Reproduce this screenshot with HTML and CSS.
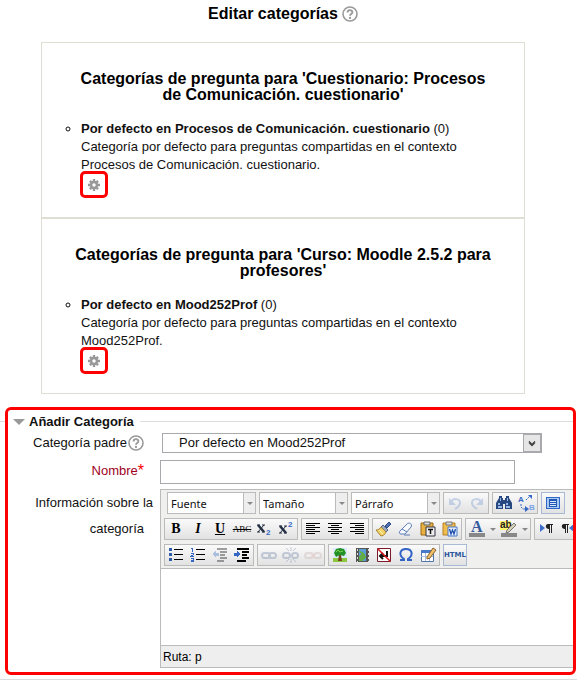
FILE: index.html
```html
<!DOCTYPE html>
<html lang="es">
<head>
<meta charset="utf-8">
<title>Editar categorías</title>
<link rel="stylesheet" href="styles.css">
</head>
<body>
<svg class="sprite" aria-hidden="true">
  <symbol id="help" viewBox="0 0 16 16">
    <circle cx="8" cy="8" r="7" fill="#fff" stroke="#999" stroke-width="1.6"/>
    <path d="M5.6 6.4C5.6 3.4 10.4 3.4 10.4 6.2C10.4 8 8 7.900 8 9.800" fill="none" stroke="#999" stroke-width="1.900"/>
    <rect x="7" y="10.900" width="2" height="2" fill="#999"/>
  </symbol>
  <symbol id="gear" viewBox="0 0 12 12">
    <g stroke="#999" stroke-width="2.400"><path d="M6 0V12M0 6H12M1.900 1.900L10.100 10.100M10.100 1.900L1.900 10.100"/></g>
    <circle cx="6" cy="6" r="4.200" fill="#999"/><circle cx="6" cy="6" r="1.700" fill="#fff"/>
  </symbol>
</svg>

<main class="categories">
  <h1 class="page-title">Editar categorías <a class="help" href="#ayuda" aria-label="Ayuda"><svg><use href="#help"/></svg></a></h1>

  <section class="box">
    <h2>Categorías de pregunta para 'Cuestionario: Procesos de Comunicación. cuestionario'</h2>
    <ul>
      <li><b>Por defecto en Procesos de Comunicación. cuestionario</b> (0)<br>Categoría por defecto para preguntas compartidas en el contexto Procesos de Comunicación. cuestionario.
        <button class="edit" type="button" aria-label="Editar"><svg><use href="#gear"/></svg></button></li>
    </ul>
  </section>
  <section class="box">
    <h2>Categorías de pregunta para 'Curso: Moodle 2.5.2 para profesores'</h2>
    <ul>
      <li><b>Por defecto en Mood252Prof</b> (0)<br>Categoría por defecto para preguntas compartidas en el contexto Mood252Prof.
        <button class="edit" type="button" aria-label="Editar"><svg><use href="#gear"/></svg></button></li>
    </ul>
  </section>
</main>

<div class="form-area">
<form class="add-form">
  <h3 class="legend"><span class="triangle"></span>Añadir Categoría</h3>

  <div class="row">
    <div class="label"><label for="parent">Categoría padre</label><a class="help" href="#ayuda-padre" aria-label="Ayuda"><svg><use href="#help"/></svg></a></div>
    <div class="field">
      <div class="parent-select">
        <select id="parent"><option>Por defecto en Mood252Prof</option></select>
        <span class="arrow"><svg viewBox="0 0 16 18"><path d="M5 7l3 3 3-3v2.500l-3 3-3-3z" fill="#444" stroke="#444"/></svg></span>
      </div>
    </div>
  </div>

  <div class="row name-row">
    <label class="label required" for="name">Nombre<span class="star">*</span></label>
    <div class="field"><input id="name" class="name" type="text"></div>
  </div>

  <div class="row editor-row">
    <label class="label two-lines" for="info"><span>Información sobre la</span><span class="second">categoría</span></label>
    <div class="field">
      <div class="editor">
        <div class="toolbar">
          <div class="tools first">
            <div class="drop"><select aria-label="Fuente"><option>Fuente</option></select><span></span></div>
            <div class="drop"><select aria-label="Tamaño"><option>Tamaño</option></select><span></span></div>
            <div class="drop"><select aria-label="Párrafo"><option>Párrafo</option></select><span></span></div>
            <div class="group">
              <button type="button" aria-label="Deshacer" class="off"><svg viewBox="0 0 22 20"><path d="M7 9C9 5 16 5 16 10C16 13 14 14 11 16" fill="none" stroke="#6f93cf" stroke-width="2"/><path d="M5 5v7h7z" fill="#6f93cf"/></svg></button>
              <button type="button" aria-label="Rehacer" class="off"><svg viewBox="0 0 22 20"><path d="M15 9C13 5 6 5 6 10C6 13 8 14 11 16" fill="none" stroke="#6f93cf" stroke-width="2"/><path d="M17 5v7h-7z" fill="#6f93cf"/></svg></button>
            </div>
            <div class="group">
              <button type="button" aria-label="Buscar"><svg viewBox="0 0 22 20"><path d="M6 3h3v2h1v2h2V5h1V3h3v2l3 5v6h-7v-5h-2v5H3v-6l3-5z" fill="#26477f"/><path d="M7 5h1v3H7zM14 5h1v3h-1zM5 10h2v2H5zM13 10h2v2h-2zM5 13h4v2H5zM13 13h4v2h-4z" fill="#9bb9e6"/></svg></button>
              <button type="button" aria-label="Reemplazar"><svg viewBox="0 0 22 20"><text x="3" y="9" class="tiny">A</text><text x="14" y="17" class="tiny light">B</text><path d="M11 7L15 3M6 11v3l2 2h4" fill="none" stroke="#3467c4" stroke-dasharray="2 1"/><path d="M13 2h4v4zM10 13l4 3-4 3z" fill="#3467c4"/></svg></button>
            </div>
            <div class="group hot">
              <button type="button" aria-label="Pantalla completa"><svg viewBox="0 0 22 20" class="crisp"><path d="M4 4h14v12H4z" fill="#2f69c5"/><path d="M5 5h12v10H5z" fill="#a9c9f5"/><path d="M7 6h8v8H7z" fill="#1f58b5"/><path d="M8 8.500h6M8 10.500h6M8 12.500h6" stroke="#d9e8ff"/></svg></button>
            </div>
          </div>

          <div class="tools">
            <div class="group">
              <button type="button" class="glyph"><b>B</b></button>
              <button type="button" class="glyph"><b><i>I</i></b></button>
              <button type="button" class="glyph"><b><u>U</u></b></button>
              <button type="button" class="glyph small"><s>ABC</s></button>
              <button type="button" aria-label="Subíndice"><svg viewBox="0 0 22 20"><path d="M5 6l6 7" stroke="#222e42" stroke-width="2.500"/><path d="M11 6l-6 7M4 6h3M9 6h3M4 13h3M9 13h3" stroke="#222e42"/><text x="13" y="16" class="tiny">2</text></svg></button>
              <button type="button" aria-label="Superíndice"><svg viewBox="0 0 22 20"><path d="M5 7l6 7" stroke="#222e42" stroke-width="2.500"/><path d="M11 7l-6 7M4 7h3M9 7h3M4 14h3M9 14h3" stroke="#222e42"/><text x="13" y="8" class="tiny">2</text></svg></button>
            </div>
            <div class="group">
              <button type="button" aria-label="Izquierda"><svg viewBox="0 0 22 20" class="crisp"><path d="M4 4.500h14M4 6.500h9M4 8.500h14M4 10.500h9M4 12.500h14M4 14.500h9" stroke="#000"/></svg></button>
              <button type="button" aria-label="Centrar"><svg viewBox="0 0 22 20" class="crisp"><path d="M4 4.500h14M7 6.500h8M4 8.500h14M7 10.500h8M4 12.500h14M7 14.500h8" stroke="#000"/></svg></button>
              <button type="button" aria-label="Derecha"><svg viewBox="0 0 22 20" class="crisp"><path d="M4 4.500h14M9 6.500h9M4 8.500h14M9 10.500h9M4 12.500h14M9 14.500h9" stroke="#000"/></svg></button>
            </div>
            <div class="group">
              <button type="button" aria-label="Limpiar formato"><svg viewBox="0 0 22 20"><path d="M12 7l4-4 2 2-4 4z" fill="#4d6fae" stroke="#2e4d88"/><path d="M10 6l5 5-2 2-5-5z" fill="#9aa9c4" stroke="#56688a"/><path d="M8 8l5 5c-1 3-4 4-5 4L3 11c2 0 4-1 5-3z" fill="#f3d267" stroke="#a78432"/><path d="M6 11l4 4" stroke="#fff3b0"/></svg></button>
              <button type="button" aria-label="Borrador"><svg viewBox="0 0 22 20"><path d="M5 12l7-7c2-2 6 0 4 3l-6 7H6c-2 0-2-2-1-3z" fill="#f6f9ff" stroke="#5f7fb5"/><path d="M7 10l5 3M9 16h6" fill="none" stroke="#5f7fb5"/></svg></button>
              <button type="button" aria-label="Pegar texto"><svg viewBox="0 0 22 20"><path d="M4 4h12v12H4z" fill="#e9b13f" stroke="#9b6a17"/><path d="M7 3h6v3H7z" fill="#d9dce2" stroke="#666"/><path d="M9 8h9v9H9z" fill="#eee" stroke="#334"/><path d="M11 10.500h5M13.500 10v5" stroke="#111" stroke-width="1.500"/></svg></button>
              <button type="button" aria-label="Pegar desde Word"><svg viewBox="0 0 22 20"><path d="M4 4h12v12H4z" fill="#f0bd4d" stroke="#b67f22"/><path d="M7 3h6v3H7z" fill="#d9dce2" stroke="#777"/><path d="M9 8h9v9H9z" fill="#e5efff" stroke="#4878c5"/><path d="M10.500 10l1.500 5 1.500-4 1.500 4 1.500-5" fill="none" stroke="#1c4eaa" stroke-width="1.300"/></svg></button>
            </div>
            <div class="group">
              <button type="button" aria-label="Color de texto"><svg viewBox="0 0 22 20"><text x="5" y="13" class="letter-a">A</text><path d="M3 14h16v4H3z" fill="#888"/></svg></button>
              <button type="button" class="more" aria-label="Más colores"></button>
              <button type="button" aria-label="Color de fondo"><svg viewBox="0 0 22 20"><path d="M2 2h11v9H2z" fill="#fff36a"/><text x="2" y="9" class="ab">ab</text><path d="M9 11l7-7 2 2-7 7-3 1z" fill="#d9d1b6" stroke="#777"/><path d="M3 14h16v4H3z" fill="#888"/></svg></button>
              <button type="button" class="more" aria-label="Más fondos"></button>
            </div>
            <div class="group">
              <button type="button" aria-label="Izquierda a derecha"><svg viewBox="0 0 22 20"><path d="M5 5v8l5-4z" fill="#3d70c9"/><path d="M13 5h5v1h-1v8h-1V6h-1v8h-1v-4c-4 0-4-5-1-5z" fill="#222"/></svg></button>
              <button type="button" aria-label="Derecha a izquierda"><svg viewBox="0 0 22 20"><path d="M17 5v8l-5-4z" fill="#3d70c9"/><path d="M7 5h5v1h-1v8h-1V6H9v8H8v-4C4 10 4 5 7 5z" fill="#222"/></svg></button>
            </div>
          </div>

          <div class="tools">
            <div class="group">
              <button type="button" aria-label="Lista"><svg viewBox="0 0 22 20" class="crisp"><path d="M4 3h3v3H4zM4 8h3v3H4zM4 13h3v3H4z" fill="#2e5da8"/><path d="M9 4.500h9M9 9.500h9M9 14.500h9" stroke="#000"/></svg></button>
              <button type="button" aria-label="Lista numerada"><svg viewBox="0 0 22 20" class="crisp"><path d="M4 3.500h1.500V7M4 8.500h2.500v1L4 11.500h3M4 13.500h2.500v3H4M4 15h2" fill="none" stroke="#3467c4"/><path d="M9 4.500h9M9 9.500h9M9 14.500h9" stroke="#000"/></svg></button>
              <button type="button" aria-label="Reducir sangría" class="off"><svg viewBox="0 0 22 20" class="crisp"><path d="M8 3.500h10M11 6.500h7M11 9.500h5M11 12.500h7M8 15.500h7" stroke="#000" stroke-width="2"/><path d="M3 9l4-3v2h3v3H7v2z" fill="#3467c4"/></svg></button>
              <button type="button" aria-label="Aumentar sangría"><svg viewBox="0 0 22 20" class="crisp"><path d="M6 3.500h12M11 6.500h7M11 9.500h5M11 12.500h7M6 15.500h9" stroke="#000" stroke-width="2"/><path d="M9 9L6 6v2H3v3h3v2z" fill="#3467c4"/></svg></button>
            </div>
            <div class="group">
              <button type="button" aria-label="Enlace" class="off"><svg viewBox="0 0 22 20"><rect x="4" y="8" width="8" height="5" rx="2.500" fill="none" stroke="#6980a5" stroke-width="2"/><rect x="11" y="8" width="7" height="5" rx="2.500" fill="none" stroke="#6980a5" stroke-width="2"/></svg></button>
              <button type="button" aria-label="Quitar enlace" class="off"><svg viewBox="0 0 22 20"><rect x="3" y="8" width="7" height="5" rx="2.500" fill="none" stroke="#6980a5" stroke-width="2"/><rect x="12" y="8" width="6" height="5" rx="2.500" fill="none" stroke="#6980a5" stroke-width="2"/><path d="M11 2v4M6 3l3 3M16 3l-3 3M11 14v4M6 17l3-3M16 17l-3-3" stroke="#6980a5"/></svg></button>
              <button type="button" aria-label="Evitar enlace" class="off faint"><svg viewBox="0 0 22 20"><rect x="3" y="8" width="8" height="5" rx="2.500" fill="none" stroke="#a88" stroke-width="2"/><rect x="12" y="8" width="7" height="5" rx="2.500" fill="none" stroke="#a88" stroke-width="2"/><path d="M8 8l6 5M14 8l-6 5" stroke="#d55"/></svg></button>
            </div>
            <div class="group">
              <button type="button" aria-label="Imagen"><svg viewBox="0 0 22 20"><path d="M4 3h14v14H4z" fill="#dcecff"/><path d="M4 13h14v4H4z" fill="#8dc63f"/><path d="M10 10h2l1 6H9z" fill="#73451d"/><path d="M5 8l2-4 4-1 4 1 2 4-2 3-4-1-4 2z" fill="#249126"/><path d="M7 7l2-2 2 2 3-1" fill="none" stroke="#80d34d"/></svg></button>
              <button type="button" aria-label="Multimedia"><svg viewBox="0 0 22 20" class="crisp"><path d="M5 3h13v14H5z" fill="#555"/><path d="M8 4h7v12H8z" fill="#5a9fd1"/><path d="M8 5l5 3 2 4-3 4H8v-4l2-3z" fill="#62ad48"/><path d="M6 4v13M17 4v13" stroke="#ddd" stroke-dasharray="2 2"/></svg></button>
              <button type="button" aria-label="Espacio duro"><svg viewBox="0 0 22 20"><path d="M4.500 3.500h13v13h-13z" fill="#fff" stroke="#7c1a27"/><path d="M14 6v5H8M10 8l-3 3 3 3" fill="none" stroke="#111" stroke-width="2"/><path d="M5 4l12 12" stroke="#d71920" stroke-width="1.500"/></svg></button>
              <button type="button" aria-label="Símbolo"><svg viewBox="0 0 22 20"><path d="M5 15h4v-1C3 10 5 4 11 4s8 6 2 10v1h4" fill="none" stroke="#3264c5" stroke-width="2"/></svg></button>
              <button type="button" aria-label="Tabla"><svg viewBox="0 0 22 20"><path d="M4.500 5.500h12v11h-12z" fill="#fff" stroke="#5275ae"/><path d="M4 5h13v3H4z" fill="#4779c8"/><path d="M4 11.500h12M8.500 8v8M12.500 8v8" stroke="#a9bde0"/><path d="M10 12l6-9 3 2-6 8-3 1z" fill="#f0c16a" stroke="#8b602a"/></svg></button>
            </div>
            <div class="group hot"><button type="button" class="html">HTML</button></div>
          </div>
        </div>
        <textarea id="info"></textarea>
        <div class="path">Ruta: p</div>
      </div>
    </div>
  </div>
</form>
</div>
</body>
</html>
```
FILE: styles.css
```css
* { box-sizing: border-box; }
body {
  margin: 0;
  background: #fff;
  color: #111;
  font: 13px/18px "Liberation Sans", Arial, sans-serif;
}
h1, h2, h3, ul { margin: 0; }
button, input, select, textarea { font: inherit; color: inherit; margin: 0; }
.sprite { position: absolute; width: 0; height: 0; }
.categories { padding: 0 52px 0 41px; }
.page-title {
  display: flex;
  justify-content: center;
  align-items: center;
  gap: 4px;
  height: 28px;
  margin-bottom: 14px;
  color: #000;
  font-size: 16px;
}
.help { display: block; width: 16px; height: 16px; flex: none; }
.help svg { display: block; width: 100%; height: 100%; }

.box { border: 1px solid #deded3; padding: 28px 32px 19px; }
.box h2 {
  margin-bottom: 17px;
  color: #000;
  font-size: 16px;
  line-height: 16px;
  text-align: center;
}
.box ul { padding-left: 7px; list-style: circle; }
.edit {
  display: block;
  width: 28px;
  height: 27px;
  margin: -3px 0 0 -1px;
  padding: 0;
  border: 3px solid #f00;
  border-radius: 5px;
  background: #fff;
}
.edit svg { display: block; width: 12px; height: 12px; margin: auto; }

.form-area {
  position: relative;
  margin-top: 13px;
  padding: 0 1px 4px 5px;
  border-bottom: 1px solid #ddd;
}
.form-area::before {
  content: "";
  position: absolute;
  left: 0;
  top: 14px;
  width: 5px;
  height: 1px;
  background: #ddd;
}
.add-form {
  overflow: hidden;
  padding-bottom: 4px;
  border: 3px solid #f00;
  border-radius: 6px;
}
.legend {
  display: flex;
  align-items: center;
  height: 23px;
  padding-left: 5px;
  font-size: 13px;
}
.legend::after { content: ""; flex: 1; height: 1px; margin-left: 6px; background: #ddd; }
.triangle {
  margin-right: 4px;
  border: 6px solid transparent;
  border-top-color: #999;
  border-bottom: 0;
}
.row { display: flex; align-items: center; margin-bottom: 7px; }
.label {
  display: flex;
  flex: none;
  justify-content: flex-end;
  align-items: center;
  width: 152px;
  padding-right: 16px;
}
.label .help { margin-left: 1px; }
.required { color: #a00020; }
.star { color: #f00; font-size: 16px; }
.field { flex: 1; min-width: 0; }
.parent-select {
  display: flex;
  width: 92%;
  height: 20px;
  margin-left: 2px;
  border: 1px solid #a9a9ad;
}
.parent-select select {
  flex: 1;
  min-width: 0;
  padding: 0 16px;
  border: 0;
  background: #fff;
  appearance: none;
}
.arrow { width: 18px; border: 1px solid #a9a9ad; background: #e6e6e6; }
.arrow svg { display: block; width: 16px; height: 16px; }
.name {
  display: block;
  width: 86%;
  height: 24px;
  border: 1px solid #a9a9ad;
  background: #fff;
}
.name-row { margin-bottom: 5px; }
.name-row .label { height: 24px; padding-bottom: 3px; }
.editor-row { align-items: flex-start; margin: 0; }
.two-lines {
  flex-direction: column;
  align-items: flex-end;
  padding-right: 7px;
  padding-top: 1px;
  line-height: 26px;
}
.second { padding-right: 9px; }

.editor { border: 1px solid #bbb; border-right: 0; }
.toolbar {
  display: grid;
  gap: 4px;
  padding: 2px 3px;
  overflow: hidden;
  border-bottom: 1px solid #bbb;
  background: #f0f0ee;
}
.tools { display: flex; gap: 3px; }
.first { padding-left: 3px; }
.drop {
  display: flex;
  flex: none;
  width: 89px;
  height: 22px;
  border: 1px solid #bbb;
  background: #fff;
}
.drop select {
  width: 75px;
  padding: 0 3px;
  border: 0;
  background: #fff;
  font: 11px "Noto Sans", sans-serif;
  appearance: none;
}
.drop span {
  display: flex;
  flex: 1;
  align-items: center;
  justify-content: center;
  border-left: 1px solid #bbb;
  background: #eee;
}
.drop span::after, .more::after {
  content: "";
  border: 3px solid transparent;
  border-top-color: #888;
  border-bottom: 0;
}
.group {
  display: flex;
  flex: none;
  height: 22px;
  border: 1px solid #bbb;
  background: linear-gradient(#fafafa, #e2e2e2);
}
.hot { border-color: #a9b9d3; }
.group button {
  display: flex;
  align-items: center;
  justify-content: center;
  width: 22px;
  height: 20px;
  padding: 0;
  border: 0;
  background: none;
}
.group svg { display: block; width: 22px; height: 20px; }
.group .more { width: 10px; }
.off svg { opacity: .35; }
.faint svg { opacity: .2; }
.crisp { shape-rendering: crispEdges; }
.group .glyph { color: #000; font: 14px "Liberation Serif", serif; }
.group .small { font-size: 9px; }
.tiny { fill: #3467c4; font: bold 8px "Liberation Sans", sans-serif; }
.light { fill: #7ba3e6; }
.letter-a { fill: #34599b; font: bold 16px "Liberation Serif", serif; }
.ab { fill: #222; font: bold 10px "Liberation Sans", sans-serif; }
.group .html { color: #2c579c; font: bold 7px "DejaVu Sans", sans-serif; }
.editor textarea {
  display: block;
  width: 100%;
  height: 76px;
  border: 0;
  background: #fff;
  resize: none;
}
.path {
  height: 22px;
  padding: 0 2px;
  border-top: 1px solid #bbb;
  background: #eee;
  color: #000;
  font-size: 12px;
  line-height: 22px;
}
```
